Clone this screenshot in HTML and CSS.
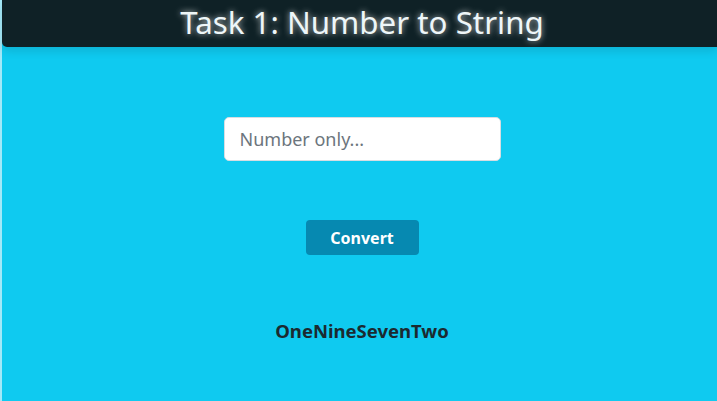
FILE: index.html
```html
<!DOCTYPE html>
<html lang="en">
<head>
<meta charset="utf-8">
<title>Task 1: Number to String</title>
<link rel="stylesheet" href="styles.css">
</head>
<body>
<div class="app">
  <header class="topbar">
    <h1 class="title">Task 1: Number to String</h1>
  </header>
  <main class="content">
    <input class="number-input" type="text" placeholder="Number only...">
    <button class="convert-btn" type="button">Convert</button>
    <p class="result">OneNineSevenTwo</p>
  </main>
</div>
</body>
</html>
```
FILE: styles.css
```css
html, body {
  margin: 0;
  padding: 0;
  height: 100%;
}
body {
  background: #a3e9f8;
  font-family: "Noto Sans", "Open Sans", sans-serif;
}
.app {
  margin-left: 2px;
  min-height: 100%;
  background: #0fcaf0;
  display: flex;
  flex-direction: column;
}
.topbar {
  height: 47px;
  padding-left: 5px;
  background: #0f2126;
  border-bottom-left-radius: 5px;
  box-shadow: 0 4px 10px rgba(0, 0, 0, 0.12);
  display: flex;
  align-items: center;
  justify-content: center;
}
.title {
  margin: 0;
  font-weight: 400;
  font-size: 31.3px;
  color: #eef6f8;
  text-shadow: 0 0 6px rgba(255, 255, 255, 0.75);
  letter-spacing: 0;
  line-height: 1;
  transform: translateY(-1px);
}
.content {
  display: flex;
  flex-direction: column;
  align-items: center;
  padding-top: 70px;
  padding-left: 5px;
}
.number-input {
  box-sizing: border-box;
  width: 277px;
  height: 44px;
  padding: 0 15px;
  border: 1px solid #d7dde2;
  border-radius: 5px;
  background: #fff;
  font-family: "Noto Sans", sans-serif;
  font-size: 18px;
  color: #212529;
  outline: none;
}
.number-input::placeholder {
  color: #6c757d;
}
.convert-btn {
  margin-top: 59px;
  width: 113px;
  height: 35px;
  border: none;
  border-radius: 4px;
  background: #0689b1;
  color: #fff;
  font-family: "Noto Sans", sans-serif;
  font-weight: 700;
  font-size: 16px;
}
.result {
  margin: 63px 0 0;
  font-weight: 700;
  font-size: 18.5px;
  color: #1b2a30;
}
```
